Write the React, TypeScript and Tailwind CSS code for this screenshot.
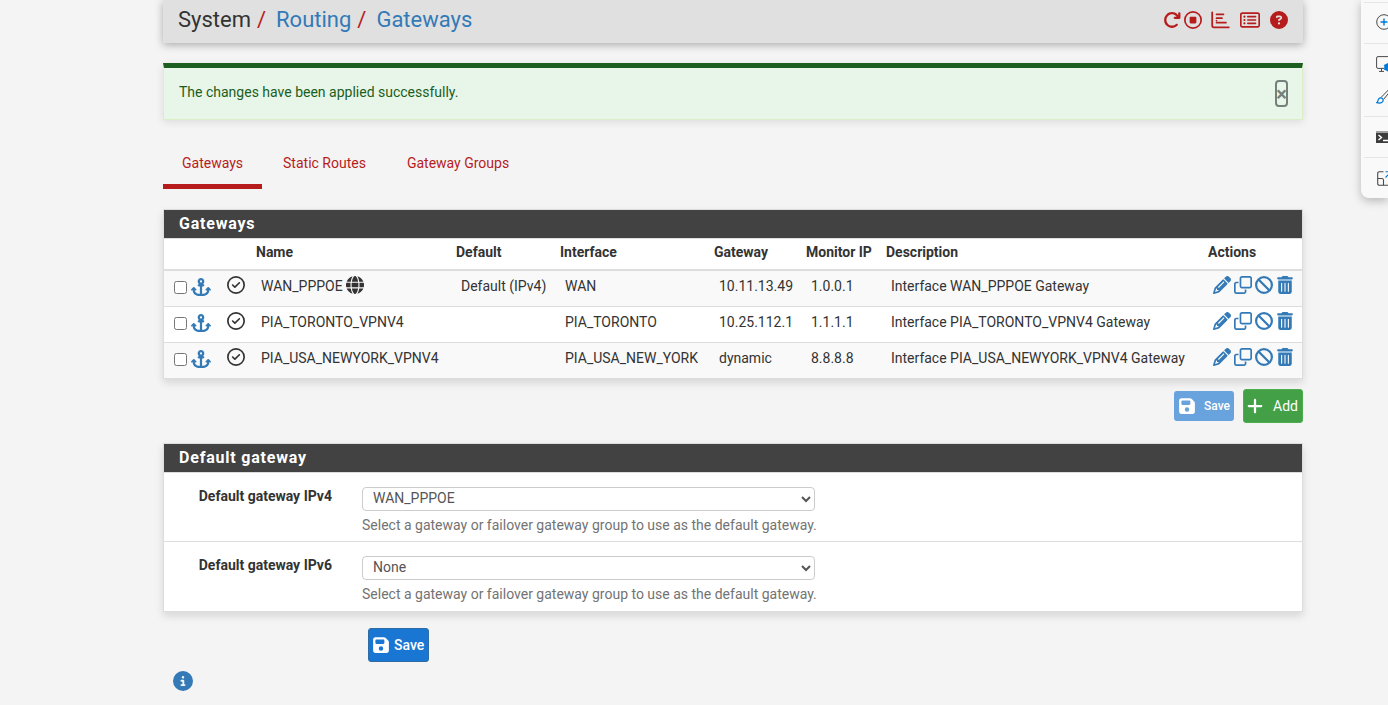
import React, { useState } from "react";
import {
  FaAnchor,
  FaArrowRotateRight,
  FaBan,
  FaCircleInfo,
  FaCircleQuestion,
  FaFloppyDisk,
  FaGlobe,
  FaPencil,
  FaPlus,
  FaRegCircleCheck,
  FaRegCircleStop,
  FaRegClone,
  FaRegRectangleList,
  FaTrashCan,
} from "react-icons/fa6";

interface Gateway {
  name: string;
  isDefault?: boolean;
  iface: string;
  address: string;
  monitor: string;
  description: string;
}

const gateways: Gateway[] = [
  {
    name: "WAN_PPPOE",
    isDefault: true,
    iface: "WAN",
    address: "10.11.13.49",
    monitor: "1.0.0.1",
    description: "Interface WAN_PPPOE Gateway",
  },
  {
    name: "PIA_TORONTO_VPNV4",
    iface: "PIA_TORONTO",
    address: "10.25.112.1",
    monitor: "1.1.1.1",
    description: "Interface PIA_TORONTO_VPNV4 Gateway",
  },
  {
    name: "PIA_USA_NEWYORK_VPNV4",
    iface: "PIA_USA_NEW_YORK",
    address: "dynamic",
    monitor: "8.8.8.8",
    description: "Interface PIA_USA_NEWYORK_VPNV4 Gateway",
  },
];

const tabs = ["Gateways", "Static Routes", "Gateway Groups"];

function BarsIcon({ className }: { className?: string }) {
  return (
    <svg viewBox="0 0 19 18" fill="none" stroke="currentColor" strokeLinecap="round" className={className}>
      <path d="M1.2 1.5v13a1.8 1.8 0 0 0 1.8 1.8h14.8" strokeWidth="1.8" />
      <path d="M5.5 3.3h7M5.5 7.2h5.5M5.5 9.6h0M5.5 11.6h9.5" strokeWidth="1.7" />
    </svg>
  );
}

const shortcuts = [
  { label: "Restart service", icon: FaArrowRotateRight, className: "size-[18px]" },
  { label: "Stop service", icon: FaRegCircleStop, className: "ml-[3px] size-[18px]" },
  { label: "Related status", icon: BarsIcon, className: "ml-[9px] h-[18px] w-[19px]" },
  { label: "Related log entries", icon: FaRegRectangleList, className: "ml-2.5 size-5" },
  { label: "Help", icon: FaCircleQuestion, className: "ml-2.5 size-[18px]" },
];

const rowActions = [
  { label: "Edit gateway", icon: FaPencil },
  { label: "Copy gateway", icon: FaRegClone },
  { label: "Disable gateway", icon: FaBan },
  { label: "Delete gateway", icon: FaTrashCan },
];

function PageHeader() {
  return (
    <header className="flex h-[43px] items-center justify-between bg-[#e0e0e0] pb-1 pl-[15px] pr-[15px] shadow-[0_2px_8px_rgba(0,0,0,0.3)]">
      <nav className="flex text-[22px] leading-6">
        <span>System</span>
        <span className="ml-1.5 text-[#b71c1c]">/</span>
        <a href="#routing" className="ml-2.5 text-[#337ab7]">Routing</a>
        <span className="ml-1.5 text-[#b71c1c]">/</span>
        <a href="#gateways" className="ml-2.5 text-[#337ab7]">Gateways</a>
      </nav>
      <div className="flex items-center text-[#b71c1c]">
        {shortcuts.map(({ label, icon: Icon, className }) => (
          <a key={label} href="#" aria-label={label}>
            <Icon className={className} />
          </a>
        ))}
      </div>
    </header>
  );
}

function PanelTitle({ children }: { children: React.ReactNode }) {
  return (
    <h2 className="border-b border-[#ddd] bg-[#424242] px-[15px] text-base leading-7 font-bold tracking-wider text-white">
      {children}
    </h2>
  );
}

function GatewayTable() {
  return (
    <section className="mt-5 border border-[#ddd] bg-white shadow-[0_4px_8px_rgba(0,0,0,0.12)]">
      <PanelTitle>Gateways</PanelTitle>
      <table className="w-full table-fixed text-left">
        <colgroup>
          <col className="w-[57px]" />
          <col className="w-[30px]" />
          <col className="w-[200px]" />
          <col className="w-[104px]" />
          <col className="w-[154px]" />
          <col className="w-[92px]" />
          <col className="w-20" />
          <col />
          <col className="w-[99px]" />
        </colgroup>
        <thead>
          <tr className="h-[31px] border-b-2 border-[#ddd]">
            <th />
            <th />
            <th className="pb-1 pl-[5px]">Name</th>
            <th className="pb-1 pl-[5px]">Default</th>
            <th className="pb-1 pl-[5px]">Interface</th>
            <th className="pb-1 pl-[5px]">Gateway</th>
            <th className="pb-1 pl-[5px] whitespace-nowrap">Monitor IP</th>
            <th className="pb-1 pl-[5px]">Description</th>
            <th className="pb-1 pl-[5px]">Actions</th>
          </tr>
        </thead>
        <tbody>
          {gateways.map((gateway) => (
            <tr key={gateway.name} className="h-9 border-t border-[#ddd] odd:bg-[#f9f9f9]">
              <td className="pb-1 pl-2.5">
                <div className="flex items-center gap-1 pt-0.5">
                  <input type="checkbox" aria-label={`Select ${gateway.name}`} className="size-[13px]" />
                  <FaAnchor className="text-xl text-[#337ab7]" />
                </div>
              </td>
              <td className="pb-1.5 pl-1.5">
                <FaRegCircleCheck className="text-lg" />
              </td>
              <td className="pb-1 pl-2.5">
                <span className="flex items-center gap-[3px]">
                  {gateway.name}
                  {gateway.isDefault && <FaGlobe className="mb-0.5 text-lg" />}
                </span>
              </td>
              <td className="pb-1 pl-2.5 whitespace-nowrap">{gateway.isDefault ? "Default (IPv4)" : ""}</td>
              <td className="pb-1 pl-2.5 whitespace-nowrap">{gateway.iface}</td>
              <td className="pb-1 pl-2.5">{gateway.address}</td>
              <td className="pb-1 pl-2.5">{gateway.monitor}</td>
              <td className="pb-1 pl-2.5 whitespace-nowrap">{gateway.description}</td>
              <td className="pb-1.5 pl-2.5">
                <div className="flex items-center gap-[3px] text-lg text-[#337ab7]">
                  {rowActions.map(({ label, icon: Icon }) => (
                    <a key={label} href="#" aria-label={label}>
                      <Icon />
                    </a>
                  ))}
                </div>
              </td>
            </tr>
          ))}
        </tbody>
      </table>
    </section>
  );
}

function GatewaySelect({ id, label, options }: { id: string; label: string; options: string[] }) {
  return (
    <div className="flex h-[69px] border-b border-[#ddd] pt-3.5 last:border-b-0">
      <label htmlFor={id} className="w-[168px] shrink-0 text-right leading-[18px] font-bold">
        {label}
      </label>
      <div className="ml-[30px]">
        <select
          id={id}
          className="block h-6 w-[453px] rounded border border-[#ccc] bg-white px-1.5 pb-0.5 text-[#555]"
        >
          {options.map((option) => (
            <option key={option}>{option}</option>
          ))}
        </select>
        <p className="mt-1 leading-5 text-[#737373]">
          Select a gateway or failover gateway group to use as the default gateway.
        </p>
      </div>
    </div>
  );
}

// Narrow tool strip docked to the edge of the window
function EdgeToolbar() {
  return (
    <aside className="fixed top-0 right-0 w-[27px] overflow-hidden rounded-bl-lg bg-[#f9f9f9] pl-[3px] text-[#4a4a4a] shadow-[0_3px_10px_rgba(0,0,0,0.25)]">
      <div className="h-[3px] border-b border-[#e5e5e5]" />
      <div className="flex h-[41px] items-center border-b border-[#e5e5e5] pb-0.5 pl-3">
        <svg viewBox="0 0 16 16" fill="none" stroke="currentColor" className="size-4 shrink-0">
          <circle cx="8" cy="8" r="7.3" />
          <path d="M8 4.5v7M4.5 8h7" stroke="#0078d7" strokeWidth="1.4" />
        </svg>
      </div>
      <div className="flex h-[73px] flex-col justify-center gap-4 border-b border-[#e5e5e5] pl-3">
        <svg viewBox="0 0 18 16" fill="none" stroke="currentColor" className="h-4 w-[18px] shrink-0">
          <path d="M17 8V2a1.4 1.4 0 0 0-1.4-1.4H2A1.4 1.4 0 0 0 .6 2v9A1.4 1.4 0 0 0 2 12.4h6M5.5 12.4v2.9M3 15.4h5" />
          <circle cx="12" cy="11.3" r="2.6" stroke="#0078d7" strokeWidth="2.4" />
          <path d="M12 7v8.6M8 9l8 4.6M8 13.6L16 9" stroke="#0078d7" strokeWidth="1.2" />
        </svg>
        <svg viewBox="0 0 16 16" fill="none" stroke="currentColor" strokeLinejoin="round" className="size-4 shrink-0">
          <path d="M5 9.5L13.5.8c1-.8 2.2.4 1.5 1.4L7.5 11.5" />
          <path d="M.6 14.6c1.6-.4 1.2-2.6 2.1-3.8 1-1.3 2.8-1.2 3.8-.1 1 1.1.7 2.8-.5 3.6-1.5 1-3.8.8-5.4.3z" stroke="#0078d7" strokeWidth="1.2" />
        </svg>
      </div>
      <div className="flex h-[41px] items-center border-b border-[#e5e5e5] pl-3">
        <svg viewBox="0 0 18 12" className="h-3 w-[18px] shrink-0">
          <path d="M0 0h18v12H0z" fill="#3c3c3c" />
          <path d="M0 0h18v2H0z" fill="#a0a0a0" />
          <path d="M2.5 4l3 2.5-3 2.5M7 9.5h5" fill="none" stroke="#fff" strokeWidth="1.4" />
        </svg>
      </div>
      <div className="flex h-10 items-center pl-[13px]">
        <svg viewBox="0 0 16 15" fill="none" stroke="currentColor" strokeWidth="1.1" className="h-[15px] w-4 shrink-0">
          <path d="M6.5.8H2.2A1.5 1.5 0 0 0 .7 2.3v10.4a1.5 1.5 0 0 0 1.5 1.5h11a1.5 1.5 0 0 0 1.5-1.5V9" />
          <path d="M.7 7.5h4A1.8 1.8 0 0 1 6.500 9.300v4.900" />
          <path d="M8.500.8h6v6M14.200 1L8.500 6.500" stroke="#0078d7" />
        </svg>
      </div>
    </aside>
  );
}

export default function App() {
  const [showAlert, setShowAlert] = useState(true);

  return (
    <div className="min-h-screen bg-[#f4f4f4] font-['Roboto',sans-serif] text-sm leading-5 text-[#333]">
      <main className="mr-[85px] ml-[163px]">
        <PageHeader />

        {showAlert && (
          <div
            role="alert"
            className="mt-5 flex h-[57px] justify-between border border-t-[5px] border-[#dcedc8] border-t-[#1b5e20] bg-[#e8f5e9] pt-3 pr-3.5 pl-[15px] text-[#1b5e20] shadow-[0_2px_8px_rgba(0,0,0,0.1)]"
          >
            <span className="pt-0.5">The changes have been applied successfully.</span>
            <button
              type="button"
              aria-label="Close"
              onClick={() => setShowAlert(false)}
              className="flex h-[27px] w-[13px] items-center justify-center rounded border-2 border-[#75807a] text-xl leading-5 font-bold text-[#75807a]"
            >
              ×
            </button>
          </div>
        )}

        <nav className="mt-5 flex gap-px">
          {tabs.map((tab, i) => (
            <a
              key={tab}
              href="#"
              className={
                i === 0
                  ? "border-b-[5px] border-[#b71c1c] px-[19px] pt-[13px] pb-[11px] text-[#b71c1c]"
                  : "px-5 pt-[13px] text-[#b71c1c]"
              }
            >
              {tab}
            </a>
          ))}
        </nav>

        <GatewayTable />

        <div className="mt-2.5 flex items-center justify-end gap-[9px]">
          <button
            type="button"
            disabled
            className="flex h-[30px] w-[60px] items-center justify-between rounded-[3px] bg-[#68a3de] px-1 text-xs font-medium text-white"
          >
            <FaFloppyDisk className="text-lg" />
            Save
          </button>
          <button
            type="button"
            className="flex h-[34px] w-[60px] items-center justify-between rounded-[3px] border border-[#4cae4c] bg-[#43a047] pr-1 pl-0.5 text-white"
          >
            <FaPlus className="text-lg" />
            Add
          </button>
        </div>

        <section className="mt-5 border border-[#ddd] bg-white shadow-[0_4px_8px_rgba(0,0,0,0.12)]">
          <PanelTitle>Default gateway</PanelTitle>
          <GatewaySelect id="gateway-v4" label="Default gateway IPv4" options={["WAN_PPPOE", "None"]} />
          <GatewaySelect id="gateway-v6" label="Default gateway IPv6" options={["None"]} />
        </section>

        <button
          type="button"
          className="mt-4 ml-[205px] flex h-[34px] items-center gap-1 rounded-[3px] border border-[#2e6da4] bg-[#1976d2] pr-1 pl-[3px] font-medium text-white"
        >
          <FaFloppyDisk className="text-lg" />
          Save
        </button>
        <button type="button" aria-label="Show information" className="mt-[9px] ml-2.5 block text-xl text-[#337ab7]">
          <FaCircleInfo />
        </button>
      </main>
      <EdgeToolbar />
    </div>
  );
}
